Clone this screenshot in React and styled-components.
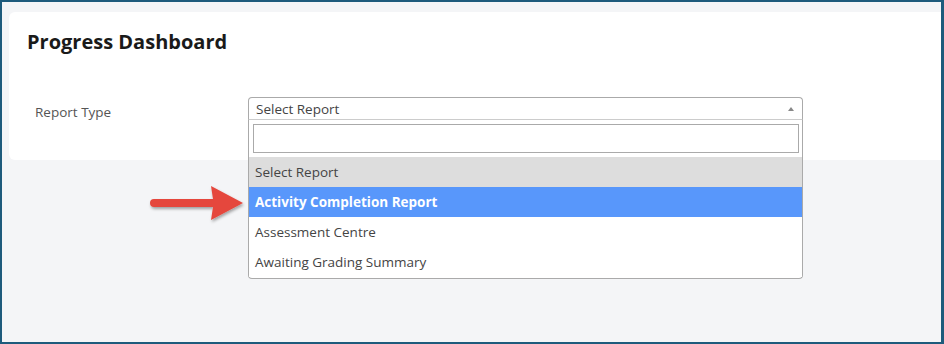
import React from "react";
import styled, { createGlobalStyle } from "styled-components";

const GlobalStyle = createGlobalStyle`
  html, body {
    margin: 0;
    padding: 0;
    background: #f4f5f7;
  }
  * {
    box-sizing: border-box;
  }
`;

const options = [
  { label: "Select Report", state: "current" },
  { label: "Activity Completion Report", state: "active" },
  { label: "Assessment Centre" },
  { label: "Awaiting Grading Summary" },
];

const App = () => {
  return (
    <Frame>
      <GlobalStyle />
      <Card>
        <Title>Progress Dashboard</Title>
        <FieldRow>
          <Label>Report Type</Label>
          <SelectWrap>
            <SelectBox>
              <span>Select Report</span>
              <Caret />
            </SelectBox>
            <Dropdown>
              <SearchInput type="text" />
              <OptionList>
                {options.map((o) => (
                  <Option key={o.label} state={o.state}>
                    {o.label}
                  </Option>
                ))}
              </OptionList>
            </Dropdown>
            <Pointer width="104" height="44" viewBox="0 0 104 44">
              <defs>
                <filter id="sh" x="-20%" y="-40%" width="140%" height="180%">
                  <feDropShadow dx="1" dy="2" stdDeviation="1.5" floodColor="#000" floodOpacity="0.35" />
                </filter>
              </defs>
              <path
                d="M9 16 L68 16 L66 3 L98 20 L66 37 L68 24 L9 24 Q5 24 5 20 Q5 16 9 16 Z"
                fill="#e5473d"
                filter="url(#sh)"
              />
            </Pointer>
          </SelectWrap>
        </FieldRow>
      </Card>
    </Frame>
  );
};

export default App;

const Frame = styled.div`
  width: 944px;
  height: 344px;
  border: 2px solid #1e5b7c;
  border-right-width: 3px;
  background: #f4f5f7;
  padding: 10px 0 0 7px;
  font-family: "Open Sans", "Liberation Sans", sans-serif;
  overflow: hidden;
`;

const Card = styled.div`
  background: #ffffff;
  height: 148px;
  border-radius: 6px 0 0 6px;
  padding: 17px 0 0 18px;
`;

const Title = styled.h1`
  margin: 0;
  font-size: 20px;
  line-height: 26px;
  font-weight: 700;
  color: #1a1a1a;
`;

const FieldRow = styled.div`
  display: flex;
  align-items: flex-start;
  margin-top: 42px;
  padding-left: 8px;
`;

const Label = styled.div`
  width: 213px;
  padding-top: 4px;
  font-size: 13.5px;
  line-height: 23px;
  color: #555555;
`;

const SelectWrap = styled.div`
  position: relative;
  width: 555px;
`;

const SelectBox = styled.div`
  display: flex;
  align-items: center;
  justify-content: space-between;
  height: 23px;
  padding: 0 8px 0 7px;
  border: 1px solid #aaaaaa;
  border-bottom-color: #cccccc;
  border-radius: 4px 4px 0 0;
  background: #ffffff;
  font-size: 13.5px;
  color: #444444;
`;

const Caret = styled.span`
  width: 0;
  height: 0;
  border-left: 3px solid transparent;
  border-right: 3px solid transparent;
  border-bottom: 4px solid #888888;
`;

const Dropdown = styled.div`
  position: absolute;
  top: 23px;
  left: 0;
  width: 555px;
  background: #ffffff;
  border: 1px solid #aaaaaa;
  border-top: none;
  border-radius: 0 0 4px 4px;
  padding-top: 4px;
`;

const SearchInput = styled.input`
  display: block;
  margin: 0 3px 0 4px;
  width: calc(100% - 7px);
  height: 29px;
  border: 1px solid #aaaaaa;
  outline: none;
  background: #ffffff;
`;

const OptionList = styled.div`
  margin-top: 4px;
  padding-bottom: 1px;
`;

const Option = styled.div`
  height: 30px;
  line-height: 30px;
  padding-left: 6px;
  font-size: 13.5px;
  font-weight: ${({ state }) => (state === "active" ? 700 : 400)};
  color: ${({ state }) => (state === "active" ? "#ffffff" : "#444444")};
  background: ${({ state }) =>
    state === "active" ? "#5897fb" : state === "current" ? "#dddddd" : "#ffffff"};
`;

const Pointer = styled.svg`
  position: absolute;
  left: -103px;
  top: 86px;
`;
